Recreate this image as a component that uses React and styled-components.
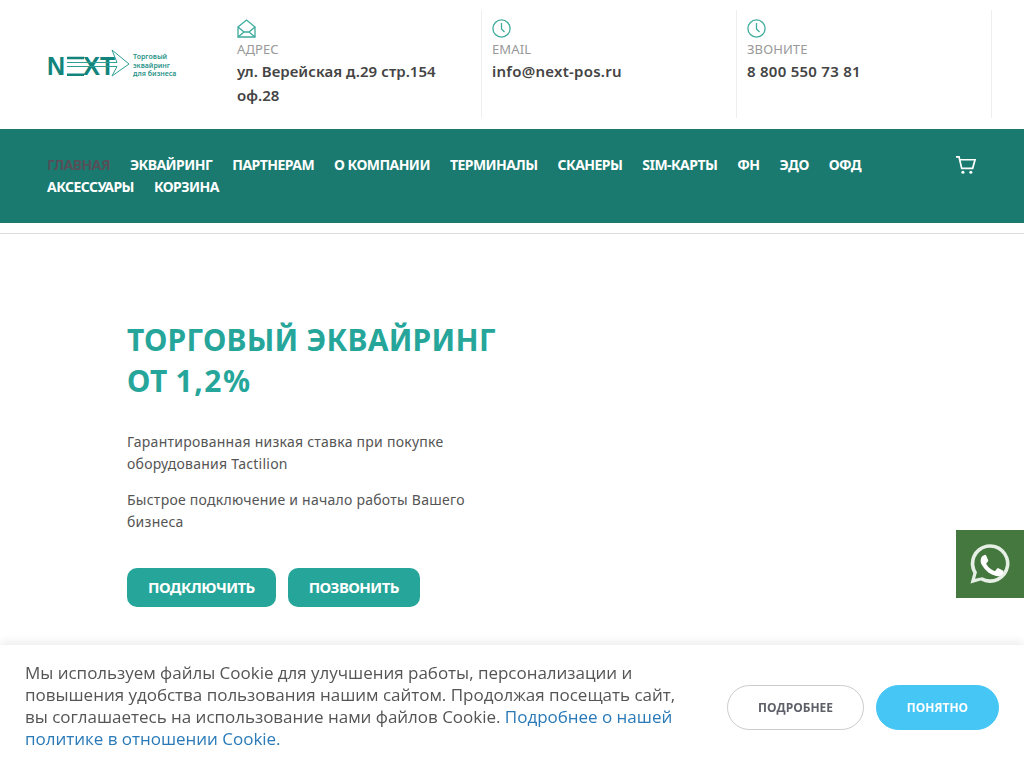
import React from 'react';
import styled, { createGlobalStyle } from 'styled-components';

const GlobalStyle = createGlobalStyle`
  html, body {
    margin: 0;
    padding: 0;
    background: #fff;
    font-family: 'Noto Sans', 'Open Sans', sans-serif;
    overflow: hidden;
  }
  * { box-sizing: border-box; }
`;

const Page = styled.div`
  width: 1024px;
  height: 768px;
  overflow: hidden;
`;

const Header = styled.header`
  display: flex;
  height: 129px;
  padding: 10px 32px 11px 47px;
`;

const LogoBox = styled.a`
  display: flex;
  align-items: center;
  width: 180px;
  height: 108px;
  flex: none;
`;

const InfoCol = styled.div`
  width: 255px;
  flex: none;
  padding: 9px 10px 0;
  border-right: 1px solid #eee;
`;

const IconSlot = styled.div`
  height: 21px;
  color: #3dab9d;
  svg { display: block; }
`;

const InfoLabel = styled.div`
  font-size: 13px;
  line-height: 18px;
  letter-spacing: 0.1px;
  color: #999;
  text-transform: uppercase;
`;

const InfoValue = styled.div`
  margin-top: 1px;
  font-size: 15px;
  font-weight: 600;
  line-height: 24px;
  letter-spacing: ${p => (p.$tight ? '0.04px' : '0.26px')};
  color: #444;
`;

const Nav = styled.nav`
  display: flex;
  align-items: flex-start;
  justify-content: space-between;
  height: 94px;
  padding: 25px 47px 0;
  background: #1a7a70;
`;

const NavList = styled.div`
  display: flex;
  flex-wrap: wrap;
  column-gap: 20px;
  width: 840px;
`;

const NavLink = styled.a`
  font-family: 'Noto Sans', sans-serif;
  font-size: 14px;
  font-weight: 700;
  line-height: 22px;
  letter-spacing: -0.55px;
  color: ${p => (p.$active ? '#555058' : '#fff')};
  text-transform: uppercase;
`;

const CartButton = styled.a`
  color: #fff;
  margin: 1px 1px 0 0;
  svg { display: block; }
`;

const Divider = styled.div`
  height: 1px;
  margin-top: 10px;
  background: #ddd;
`;

const Hero = styled.section`
  padding: 85px 0 0 127px;
  width: 510px;
`;

const Title = styled.h1`
  margin: 0 0 30px;
  font-size: 30px;
  font-weight: 700;
  line-height: 41px;
  letter-spacing: 0.25px;
  color: #26a69a;
  text-transform: uppercase;
`;

const Rate = styled.span`
  letter-spacing: 1.5px;
`;

const Lead = styled.p`
  margin: 0 0 14px;
  width: 350px;
  font-size: 14px;
  line-height: 22px;
  letter-spacing: 0.25px;
  color: #555;
`;

const ButtonRow = styled.div`
  display: flex;
  gap: 12px;
  margin-top: 35px;
`;

const HeroButton = styled.a`
  display: flex;
  align-items: center;
  justify-content: center;
  height: 39px;
  padding: 0 21px 2px;
  border-radius: 10px;
  background: #26a69a;
  color: #fff;
  font-size: 15px;
  font-weight: 700;
  text-transform: uppercase;
  letter-spacing: -0.55px;
`;

const WhatsApp = styled.a`
  position: fixed;
  right: 0;
  top: 530px;
  width: 68px;
  height: 68px;
  display: flex;
  align-items: center;
  justify-content: center;
  background: #44783f;
`;

const CookieBar = styled.div`
  position: fixed;
  left: 0;
  right: 0;
  bottom: 0;
  height: 123px;
  display: flex;
  align-items: flex-start;
  padding: 17px 25px 0;
  background: #fff;
  box-shadow: 0 -2px 10px rgba(0, 0, 0, 0.09);
`;

const CookieText = styled.p`
  margin: 0;
  width: 652px;
  flex: none;
  font-family: 'Open Sans', sans-serif;
  font-size: 17px;
  line-height: 22px;
  letter-spacing: -0.02px;
  color: #555;
`;

const CookieLink = styled.a`
  color: #2a7ab8;
`;

const CookieActions = styled.div`
  display: flex;
  gap: 12px;
  margin: 23px 0 0 50px;
`;

const CookieButton = styled.a`
  display: flex;
  align-items: center;
  justify-content: center;
  width: ${p => (p.$primary ? '123px' : '137px')};
  height: 45px;
  border-radius: 23px;
  border: 1px solid ${p => (p.$primary ? '#45c6f5' : '#ccc')};
  background: ${p => (p.$primary ? '#45c6f5' : '#fff')};
  color: ${p => (p.$primary ? '#fff' : '#5d6068')};
  font-family: 'Open Sans', sans-serif;
  font-size: 12px;
  font-weight: 700;
  text-transform: uppercase;
`;

const logoFont = 'Liberation Sans, sans-serif';

// логотип: буквы настоящим текстом, E и стрелка линиями
const Logo = () => (
  <svg width="132" height="36" viewBox="0 0 132 36" fill="none">
    <text x="0" y="29" fontFamily={logoFont} fontSize="25" fontWeight="700" fill="#12847c">N</text>
    <path d="M20 12h17M20 28.8h17" stroke="#12847c" strokeWidth="2.4" />
    <text x="36" y="29" fontFamily={logoFont} fontSize="25" fontWeight="700" fill="#12847c" textLength="17" lengthAdjust="spacingAndGlyphs">X</text>
    <text x="53" y="29" fontFamily={logoFont} fontSize="25" fontWeight="700" fill="#12847c" textLength="15" lengthAdjust="spacingAndGlyphs">T</text>
    <path d="M20 16.5h50L65 4l17 14-17 12 5-9.5H20" stroke="#2f9f94" strokeWidth="1" />
    <text x="86" y="13" fontFamily="Noto Sans, sans-serif" fontSize="7" fontWeight="600" fill="#2a9389">Торговый</text>
    <text x="86" y="21.5" fontFamily="Noto Sans, sans-serif" fontSize="7" fontWeight="600" fill="#2a9389">эквайринг</text>
    <text x="86" y="30" fontFamily="Noto Sans, sans-serif" fontSize="7" fontWeight="600" fill="#2a9389">для бизнеса</text>
  </svg>
);

const MailIcon = () => (
  <svg width="19" height="19" viewBox="0 0 19 19" fill="none" stroke="currentColor" strokeWidth="1.3">
    <path d="M1 8l8.5-7L18 8v10H1z" />
    <path d="M1 8l6 5h5l6-5M1 18l6-5M18 18l-6-5" />
  </svg>
);

const ClockIcon = () => (
  <svg width="19" height="19" viewBox="0 0 19 19" fill="none" stroke="currentColor" strokeWidth="1.3">
    <circle cx="9.5" cy="9.5" r="8.6" />
    <path d="M9.5 4v6l3 3" />
  </svg>
);

const CartIcon = () => (
  <svg width="21" height="20" viewBox="0 0 22 20" fill="none" stroke="currentColor" strokeWidth="1.8">
    <path d="M1 1.5h3.2L7 13.5h11.5L21 4.5H5" />
    <circle cx="8.3" cy="17.6" r="1.6" fill="currentColor" stroke="none" />
    <circle cx="16.6" cy="17.6" r="1.6" fill="currentColor" stroke="none" />
  </svg>
);

const WhatsAppIcon = () => (
  <svg width="42" height="42" viewBox="0 0 42 42">
    <path d="M1.5 40.5l2.8-10.2A19.4 19.4 0 1 1 11.8 37.6z" fill="#e6efe4" />
    <path d="M5.3 36.7l2-7A16.6 16.6 0 1 1 13 35z" fill="#44783f" transform="translate(21 20) scale(.95) translate(-21 -20)" />
    <path d="M14.8 11.4c-.5 0-1.3.2-2 1-.7.7-2.3 2.3-2.3 5.4s2.3 6.2 2.7 6.6c.3.4 4.5 7.1 11.2 9.7 5.5 2.2 6.6 1.8 7.8 1.7 1.2-.1 3.9-1.6 4.4-3.1.5-1.5.5-2.8.4-3.1-.2-.3-.6-.4-1.3-.8l-4.5-2.2c-.6-.2-1-.3-1.5.3l-2.1 2.6c-.4.4-.8.5-1.4.2-.7-.4-2.8-1-5.3-3.3-2-1.7-3.3-3.9-3.7-4.5-.4-.7 0-1 .3-1.4l1-1.2c.3-.4.4-.7.7-1.1.2-.5.1-.9-.1-1.2l-2-4.9c-.5-1.3-1.1-1.3-1.5-1.3z"
      transform="translate(2.6 2.4) scale(.86)" fill="#fff" />
  </svg>
);

const navItems = ['Главная', 'Эквайринг', 'Партнерам', 'О компании', 'Терминалы', 'Сканеры', 'SIM-карты', 'ФН', 'ЭДО', 'ОФД', 'Аксессуары', 'Корзина'];

export default function App() {
  return (
    <Page>
      <GlobalStyle />
      <Header>
        <LogoBox><Logo /></LogoBox>
        <InfoCol>
          <IconSlot><MailIcon /></IconSlot>
          <InfoLabel>Адрес</InfoLabel>
          <InfoValue $tight>ул. Верейская д.29 стр.154 оф.28</InfoValue>
        </InfoCol>
        <InfoCol>
          <IconSlot><ClockIcon /></IconSlot>
          <InfoLabel>Email</InfoLabel>
          <InfoValue>info@next-pos.ru</InfoValue>
        </InfoCol>
        <InfoCol>
          <IconSlot><ClockIcon /></IconSlot>
          <InfoLabel>Звоните</InfoLabel>
          <InfoValue>8 800 550 73 81</InfoValue>
        </InfoCol>
      </Header>
      <Nav>
        <NavList>
          {navItems.map((item, i) => (
            <NavLink key={item} $active={i === 0}>{item}</NavLink>
          ))}
        </NavList>
        <CartButton><CartIcon /></CartButton>
      </Nav>
      <Divider />
      <Hero>
        <Title>Торговый эквайринг<br />от <Rate>1,2%</Rate></Title>
        <Lead>Гарантированная низкая ставка при покупке оборудования Tactilion</Lead>
        <Lead>Быстрое подключение и начало работы Вашего бизнеса</Lead>
        <ButtonRow>
          <HeroButton>Подключить</HeroButton>
          <HeroButton>Позвонить</HeroButton>
        </ButtonRow>
      </Hero>
      <WhatsApp><WhatsAppIcon /></WhatsApp>
      <CookieBar>
        <CookieText>
          Мы используем файлы Cookie для улучшения работы, персонализации и повышения удобства пользования нашим сайтом. Продолжая посещать сайт, вы соглашаетесь на использование нами файлов Cookie.{' '}
          <CookieLink>Подробнее о нашей политике в отношении Cookie.</CookieLink>
        </CookieText>
        <CookieActions>
          <CookieButton>Подробнее</CookieButton>
          <CookieButton $primary>Понятно</CookieButton>
        </CookieActions>
      </CookieBar>
    </Page>
  );
}
